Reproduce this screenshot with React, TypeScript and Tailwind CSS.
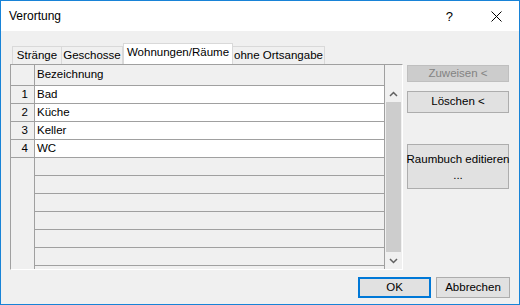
// Verortung dialog: tabbed room grid with side actions and OK/Abbrechen.

const ROWS = ['Bad', 'Küche', 'Keller', 'WC'];

const TABS: { label: string; w: string; active?: boolean }[] = [
  { label: 'Stränge', w: 'w-[50px]' },
  { label: 'Geschosse', w: 'w-[62px]' },
  { label: 'Wohnungen/Räume', w: 'w-[110px]', active: true },
  { label: 'ohne Ortsangabe', w: 'w-[93px]' },
];

function Chevron({ down }: { down?: boolean }) {
  return (
    <svg width="9" height="6" viewBox="0 0 9 6" className={down ? 'rotate-180' : ''}>
      <path d="M1 5 L4.5 1.5 L8 5" fill="none" stroke="#606060" strokeWidth="1.5" />
    </svg>
  );
}

function Grid() {
  return (
    <div className="flex h-[206px] w-[393px] border border-t-[#a0a0a0] border-l-[#a0a0a0] border-r-white border-b-white">
      <div className="flex w-[374px] flex-col overflow-hidden">
        <div className="flex h-[21px] shrink-0 border-b border-[#a0a0a0]">
          <div className="w-[24px] border-r border-[#a0a0a0]" />
          <div className="flex w-[350px] items-center border-r border-[#a0a0a0] pl-[2px]">Bezeichnung</div>
        </div>
        {ROWS.map((r, i) => (
          <div key={r} className="flex h-[18px] shrink-0 border-b border-[#a0a0a0]">
            <div className="flex w-[24px] items-center justify-end border-r border-[#a0a0a0] pr-[6px]">{i + 1}</div>
            <div className="flex w-[350px] items-center border-r border-[#a0a0a0] bg-white pl-[2px]">{r}</div>
          </div>
        ))}
        <div className="flex min-h-0 flex-1">
          <div className="w-[24px] border-r border-[#a0a0a0]" />
          <div className="flex w-[350px] flex-col overflow-hidden border-r border-[#a0a0a0]">
            {Array.from({ length: 7 }).map((_, i) => (
              <div key={i} className="h-[18px] shrink-0 border-b border-[#a0a0a0]" />
            ))}
          </div>
        </div>
      </div>
      <div className="flex w-[17px] flex-col">
        <div className="h-[20px] shrink-0" />
        <div className="flex h-[17px] shrink-0 items-center justify-center">
          <Chevron />
        </div>
        <div className="mx-[1px] flex-1 bg-[#cdcdcd]" />
        <div className="flex h-[17px] shrink-0 items-center justify-center">
          <Chevron down />
        </div>
      </div>
    </div>
  );
}

export default function App() {
  return (
    <div
      className="flex h-[305px] w-[520px] flex-col border border-[#1883d7] bg-[#f0f0f0] text-[11.5px] leading-none whitespace-nowrap text-black"
      style={{ fontFamily: '"Liberation Sans", Arial, sans-serif' }}
    >
      <div className="flex h-[30px] shrink-0 items-center bg-white pl-[8px]">
        <span className="flex-1 text-[12px]">Verortung</span>
        <span className="mr-[38px] text-[13px]">?</span>
        <svg width="11" height="11" viewBox="0 0 11 11" className="mr-[17px]">
          <path d="M0.5 0.5 L10.5 10.5 M10.5 0.5 L0.5 10.5" stroke="#000" strokeWidth="1" />
        </svg>
      </div>

      <div className="flex flex-1 flex-col pl-[9px] pr-[9px]">
        <div className="flex">
          <div className="flex flex-col pt-[12px]">
            <div className="flex h-[21px] items-end pl-[2px]">
              {TABS.map((t) =>
                t.active ? (
                  <div
                    key={t.label}
                    className={`${t.w} flex h-[21px] items-center justify-center border border-b-0 border-[#d9d9d9] bg-white pb-[2px]`}
                  >
                    {t.label}
                  </div>
                ) : (
                  <div
                    key={t.label}
                    className={`${t.w} -ml-px flex h-[18px] items-center justify-center border border-b-0 border-[#d9d9d9] first:ml-0`}
                  >
                    {t.label}
                  </div>
                ),
              )}
            </div>
            <Grid />
          </div>

          <div className="ml-[4px] flex flex-col pt-[34px]">
            <div className="flex h-[17px] w-[102px] items-center justify-center border border-[#bfbfbf] bg-[#cccccc] text-[#838383]">
              Zuweisen &lt;
            </div>
            <div className="mt-[9px] flex h-[22px] w-[102px] items-center justify-center border border-[#adadad] bg-[#e1e1e1]">
              Löschen &lt;
            </div>
            <div className="mt-[31px] flex h-[45px] w-[102px] flex-col items-center justify-center gap-[2px] border border-[#adadad] bg-[#e1e1e1] leading-[14px]">
              <span>Raumbuch editieren</span>
              <span>...</span>
            </div>
          </div>
        </div>

        <div className="mt-[7px] flex justify-end gap-[5px]">
          <div className="flex h-[21px] w-[73px] items-center justify-center border-2 border-[#0078d7] bg-[#e1e1e1]">
            OK
          </div>
          <div className="flex h-[21px] w-[74px] items-center justify-center border border-[#adadad] bg-[#e1e1e1]">
            Abbrechen
          </div>
        </div>
      </div>
    </div>
  );
}
